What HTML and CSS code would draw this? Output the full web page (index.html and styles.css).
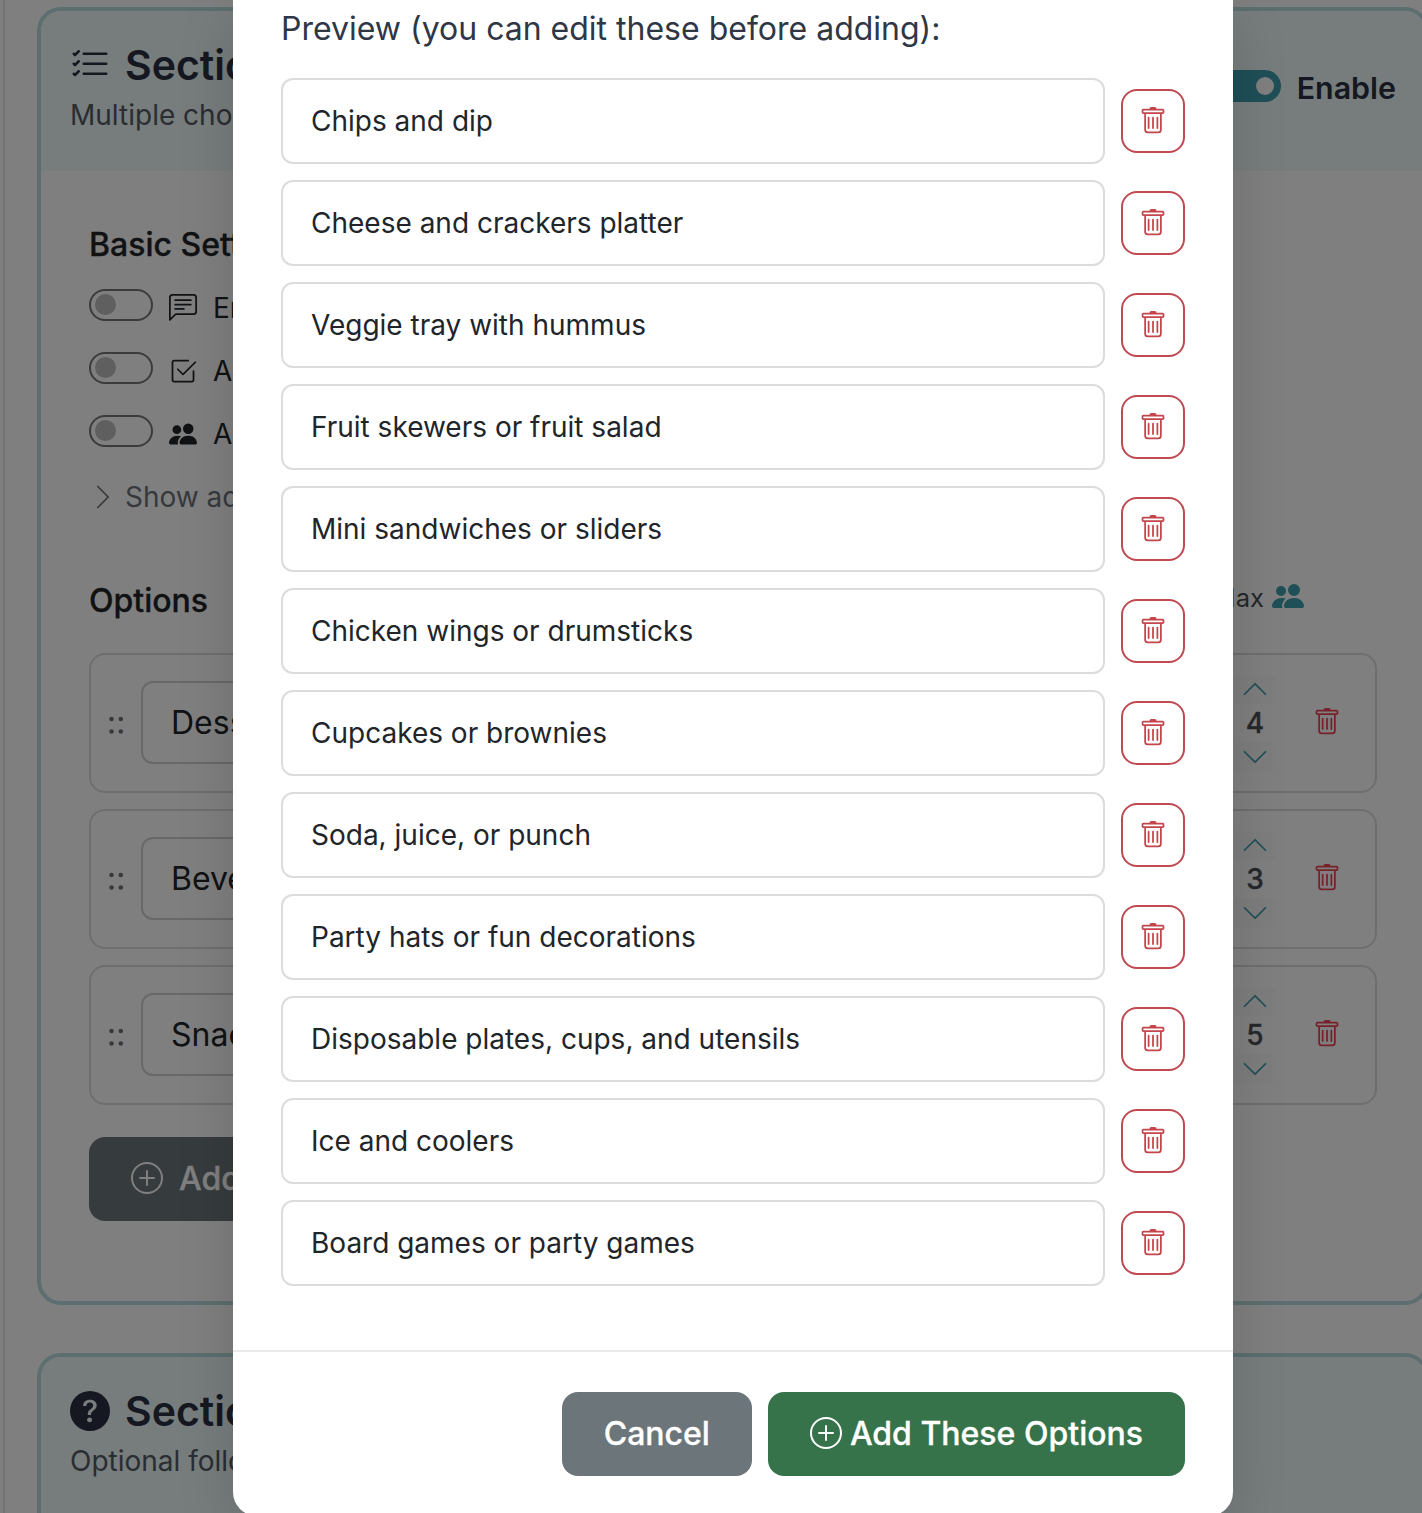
FILE: index.html
```
<!DOCTYPE html>
<html lang="en">
<head>
<meta charset="utf-8">
<title>Add options</title>
<link rel="stylesheet" href="styles.css">
</head>
<body>
<svg class="sprite" aria-hidden="true">
  <symbol id="trash" viewBox="0 0 16 16"><path d="M5.5 5.5A.5.5 0 0 1 6 6v6a.5.5 0 0 1-1 0V6a.5.5 0 0 1 .5-.5m2.5 0a.5.5 0 0 1 .5.5v6a.5.5 0 0 1-1 0V6a.5.5 0 0 1 .5-.5m3 .5a.5.5 0 0 0-1 0v6a.5.5 0 0 0 1 0z"/><path d="M14.5 3a1 1 0 0 1-1 1H13v9a2 2 0 0 1-2 2H5a2 2 0 0 1-2-2V4h-.5a1 1 0 0 1-1-1V2a1 1 0 0 1 1-1H6a1 1 0 0 1 1-1h2a1 1 0 0 1 1 1h3.5a1 1 0 0 1 1 1zM4.118 4 4 4.059V13a1 1 0 0 0 1 1h6a1 1 0 0 0 1-1V4.059L11.882 4zM2.5 3h11V2h-11z"/></symbol>
  <symbol id="plus" viewBox="0 0 16 16"><path d="M8 15A7 7 0 1 1 8 1a7 7 0 0 1 0 14m0 1A8 8 0 1 0 8 0a8 8 0 0 0 0 16"/><path d="M8 4a.5.5 0 0 1 .5.5v3h3a.5.5 0 0 1 0 1h-3v3a.5.5 0 0 1-1 0v-3h-3a.5.5 0 0 1 0-1h3v-3A.5.5 0 0 1 8 4"/></symbol>
  <symbol id="people" viewBox="0 0 16 16"><path d="M7 14s-1 0-1-1 1-4 5-4 5 3 5 4-1 1-1 1zm4-6a3 3 0 1 0 0-6 3 3 0 0 0 0 6m-5.784 6A2.24 2.24 0 0 1 5 13c0-1.355.68-2.75 1.936-3.72A6.3 6.3 0 0 0 5 9c-4 0-5 3-5 4s1 1 1 1zM4.500 8a2.500 2.500 0 1 0 0-5 2.500 2.500 0 0 0 0 5"/></symbol>
  <symbol id="chat" viewBox="0 0 16 16"><path d="M14 1a1 1 0 0 1 1 1v8a1 1 0 0 1-1 1H4.414A2 2 0 0 0 3 11.586l-2 2V2a1 1 0 0 1 1-1zM2 0a2 2 0 0 0-2 2v12.793a.5.5 0 0 0 .854.353l2.853-2.853A1 1 0 0 1 4.414 12H14a2 2 0 0 0 2-2V2a2 2 0 0 0-2-2z"/><path d="M3 3.500a.5.5 0 0 1 .5-.5h9a.5.5 0 0 1 0 1h-9a.5.5 0 0 1-.5-.5M3 6a.5.5 0 0 1 .5-.5h9a.5.5 0 0 1 0 1h-9A.5.5 0 0 1 3 6m0 2.500a.5.5 0 0 1 .5-.5h5a.5.5 0 0 1 0 1h-5a.5.5 0 0 1-.5-.5"/></symbol>
  <symbol id="check" viewBox="0 0 16 16"><path d="M3 14.500A1.500 1.500 0 0 1 1.500 13V3A1.500 1.500 0 0 1 3 1.500h8a.5.5 0 0 1 0 1H3a.5.5 0 0 0-.5.5v10a.5.5 0 0 0 .5.5h10a.5.5 0 0 0 .5-.5V8a.5.5 0 0 1 1 0v5a1.500 1.500 0 0 1-1.500 1.500z"/><path d="m8.354 10.354 7-7a.5.5 0 0 0-.708-.708L8 9.293 5.354 6.646a.5.5 0 1 0-.708.708l3 3a.5.5 0 0 0 .708 0"/></symbol>
  <symbol id="list" viewBox="0 0 16 16"><path d="M5 11.500a.5.5 0 0 1 .5-.5h9a.5.5 0 0 1 0 1h-9a.5.5 0 0 1-.5-.5m0-4a.5.5 0 0 1 .5-.5h9a.5.5 0 0 1 0 1h-9a.5.5 0 0 1-.5-.5m0-4a.5.5 0 0 1 .5-.5h9a.5.5 0 0 1 0 1h-9a.5.5 0 0 1-.5-.5M3.854 2.146a.5.5 0 0 1 0 .708l-1.500 1.500a.5.5 0 0 1-.708 0l-.5-.5a.5.5 0 1 1 .708-.708L2 3.293l1.146-1.147a.5.5 0 0 1 .708 0m0 4a.5.5 0 0 1 0 .708l-1.500 1.500a.5.5 0 0 1-.708 0l-.5-.5a.5.5 0 1 1 .708-.708L2 7.293l1.146-1.147a.5.5 0 0 1 .708 0m0 4a.5.5 0 0 1 0 .708l-1.500 1.500a.5.5 0 0 1-.708 0l-.5-.5a.5.5 0 0 1 .708-.708l.146.147 1.146-1.147a.5.5 0 0 1 .708 0"/></symbol>
  <symbol id="question" viewBox="0 0 16 16"><path d="M16 8A8 8 0 1 1 0 8a8 8 0 0 1 16 0M5.496 6.033h.825c.138 0 .248-.113.266-.25.09-.656.540-1.134 1.342-1.134.686 0 1.314.343 1.314 1.168 0 .635-.374.927-.965 1.371-.673.489-1.206 1.060-1.168 1.987l.003.217a.25.25 0 0 0 .25.246h.811a.25.25 0 0 0 .25-.25v-.105c0-.718.273-.927 1.010-1.486.609-.463 1.244-.977 1.244-2.056 0-1.511-1.276-2.241-2.673-2.241-1.267 0-2.655.590-2.750 2.286a.237.237 0 0 0 .241.247m2.325 6.443c.610 0 1.029-.394 1.029-.927 0-.552-.420-.940-1.029-.940-.584 0-1.009.388-1.009.940 0 .533.425.927 1.010.927z"/></symbol>
  <symbol id="right" viewBox="0 0 16 16"><path d="M4.646 1.646a.5.5 0 0 1 .708 0l6 6a.5.5 0 0 1 0 .708l-6 6a.5.5 0 0 1-.708-.708L10.293 8 4.646 2.354a.5.5 0 0 1 0-.708"/></symbol>
  <symbol id="up" viewBox="0 0 16 16"><path d="M7.646 4.646a.5.5 0 0 1 .708 0l6 6a.5.5 0 0 1-.708.708L8 5.707l-5.646 5.647a.5.5 0 0 1-.708-.708z"/></symbol>
  <symbol id="down" viewBox="0 0 16 16"><path d="M1.646 4.646a.5.5 0 0 1 .708 0L8 10.293l5.646-5.647a.5.5 0 0 1 .708.708l-6 6a.5.5 0 0 1-.708 0l-6-6a.5.5 0 0 1 0-.708"/></symbol>
  <symbol id="grip" viewBox="0 0 18 18"><circle cx="4.500" cy="3" r="2.300"/><circle cx="13.800" cy="3" r="2.300"/><circle cx="4.500" cy="15.500" r="2.300"/><circle cx="13.800" cy="15.500" r="2.300"/></symbol>
</svg>

<main class="page">
  <section class="card card-choices">
    <header class="card-head">
      <div class="head-text">
        <h2 class="card-title"><svg class="i40"><use href="#list"/></svg>Section</h2>
        <p class="card-sub">Multiple choice</p>
      </div>
      <div class="enable"><span class="switch on"></span>Enable</div>
    </header>
    <div class="card-body">
      <h3 class="sub-title">Basic Settings</h3>
      <div class="setting"><span class="switch"></span><svg class="i28"><use href="#chat"/></svg><span>Enable</span></div>
      <div class="setting"><span class="switch"></span><svg class="i28"><use href="#check"/></svg><span>Allow</span></div>
      <div class="setting"><span class="switch"></span><svg class="i28"><use href="#people"/></svg><span>Allow</span></div>
      <div class="advanced"><svg class="i28"><use href="#right"/></svg><span>Show advanced</span></div>
      <div class="options-head">
        <h3 class="sub-title">Options</h3>
        <div class="max">Max<svg class="i32"><use href="#people"/></svg></div>
      </div>
      <div class="option">
        <svg class="grip"><use href="#grip"/></svg><div class="option-name">Desserts</div>
        <div class="stepper"><span class="step"><svg><use href="#up"/></svg></span><b>4</b><span class="step"><svg><use href="#down"/></svg></span></div>
        <svg class="i28 red"><use href="#trash"/></svg>
      </div>
      <div class="option">
        <svg class="grip"><use href="#grip"/></svg><div class="option-name">Beverages</div>
        <div class="stepper"><span class="step"><svg><use href="#up"/></svg></span><b>3</b><span class="step"><svg><use href="#down"/></svg></span></div>
        <svg class="i28 red"><use href="#trash"/></svg>
      </div>
      <div class="option">
        <svg class="grip"><use href="#grip"/></svg><div class="option-name">Snacks</div>
        <div class="stepper"><span class="step"><svg><use href="#up"/></svg></span><b>5</b><span class="step"><svg><use href="#down"/></svg></span></div>
        <svg class="i28 red"><use href="#trash"/></svg>
      </div>
      <div class="btn btn-dark"><svg class="i32"><use href="#plus"/></svg>Add</div>
    </div>
  </section>
  <section class="card">
    <header class="card-head">
      <div class="head-text">
        <h2 class="card-title"><svg class="i40"><use href="#question"/></svg>Section</h2>
        <p class="card-sub">Optional follow</p>
      </div>
    </header>
  </section>
</main>

<div class="backdrop">
  <div class="modal">
    <div class="modal-body">
      <h4 class="modal-title">Preview (you can edit these before adding):</h4>
      <div class="row"><div class="field">Chips and dip</div><div class="del"><svg class="i28"><use href="#trash"/></svg></div></div>
      <div class="row"><div class="field">Cheese and crackers platter</div><div class="del"><svg class="i28"><use href="#trash"/></svg></div></div>
      <div class="row"><div class="field">Veggie tray with hummus</div><div class="del"><svg class="i28"><use href="#trash"/></svg></div></div>
      <div class="row"><div class="field">Fruit skewers or fruit salad</div><div class="del"><svg class="i28"><use href="#trash"/></svg></div></div>
      <div class="row"><div class="field">Mini sandwiches or sliders</div><div class="del"><svg class="i28"><use href="#trash"/></svg></div></div>
      <div class="row"><div class="field">Chicken wings or drumsticks</div><div class="del"><svg class="i28"><use href="#trash"/></svg></div></div>
      <div class="row"><div class="field">Cupcakes or brownies</div><div class="del"><svg class="i28"><use href="#trash"/></svg></div></div>
      <div class="row"><div class="field">Soda, juice, or punch</div><div class="del"><svg class="i28"><use href="#trash"/></svg></div></div>
      <div class="row"><div class="field">Party hats or fun decorations</div><div class="del"><svg class="i28"><use href="#trash"/></svg></div></div>
      <div class="row"><div class="field">Disposable plates, cups, and utensils</div><div class="del"><svg class="i28"><use href="#trash"/></svg></div></div>
      <div class="row"><div class="field">Ice and coolers</div><div class="del"><svg class="i28"><use href="#trash"/></svg></div></div>
      <div class="row"><div class="field">Board games or party games</div><div class="del"><svg class="i28"><use href="#trash"/></svg></div></div>
    </div>
    <footer class="modal-foot">
      <div class="btn btn-grey">Cancel</div>
      <div class="btn btn-green"><svg class="i32"><use href="#plus"/></svg>Add These Options</div>
    </footer>
  </div>
</div>
</body>
</html>
```
FILE: styles.css
```
* { box-sizing: border-box; }
html, body { height: 1513px; overflow: hidden; }
body {
  margin: 0;
  position: relative;
  background: #fff;
  color: #212529;
  font-family: Inter, "Liberation Sans", sans-serif;
  font-size: 28px;
}
h2, h3, h4, p { margin: 0; }
svg { fill: currentColor; flex: none; display: block; }
.sprite { display: none; }
.i28 { width: 28px; height: 28px; }
.i32 { width: 32px; height: 32px; }
.i40 { width: 40px; height: 40px; }
.red { color: #ec4555; }

/* Page behind the dialog */
.page {
  width: 1460px;
  height: 1513px;
  margin-left: 3px;
  border-left: 2px solid #e6e6e6;
  padding: 7px 0 0 32px;
  overflow: hidden;
}
.card {
  width: 1392px;
  height: 400px;
  border: 4px solid #b8dcde;
  border-radius: 24px;
  overflow: hidden;
}
.card-choices { height: 1298px; margin-bottom: 48px; }
.card-head {
  display: flex;
  justify-content: space-between;
  height: 160px;
  padding: 25px 29px 0 29px;
  background: #eefafa;
  color: #2d3142;
}
.card + .card .card-head { height: 400px; }
.card-title {
  display: flex;
  align-items: center;
  gap: 15px;
  height: 57px;
  font-size: 41px;
  font-weight: 600;
}
.card-sub { height: 42px; line-height: 45px; color: #555b63; }
.enable {
  display: flex;
  align-items: center;
  gap: 16px;
  height: 56px;
  margin-top: 24px;
  font-size: 30.4px;
  font-weight: 600;
}
.switch {
  display: flex;
  align-items: center;
  width: 64px;
  height: 32px;
  border: 2px solid #777;
  border-radius: 16px;
  padding: 0 3.5px;
}
.switch::before {
  content: "";
  width: 21px;
  height: 21px;
  border-radius: 50%;
  background: #bfbfbf;
}
.switch.on {
  justify-content: flex-end;
  margin-bottom: 4px;
  padding-right: 5px;
  background: #3f9fae;
  border-color: #3f9fae;
}
.switch.on::before { width: 18px; height: 18px; background: #fff; }
.card-body { padding: 49px 48px 0; }
.sub-title { height: 48px; line-height: 50px; font-size: 32px; font-weight: 500; -webkit-text-stroke: .3px; }
.setting { display: flex; align-items: center; gap: 16px; height: 63px; }
.sub-title + .setting { margin-top: 5px; }
.setting svg { margin-top: 6px; }
.setting span:last-child { margin-top: 6px; }
.advanced { display: flex; align-items: center; gap: 8px; height: 63px; padding-top: 6px; color: #6c757d; }
.options-head { display: flex; justify-content: space-between; height: 77px; margin-top: 51px; }
.max { display: flex; align-items: center; gap: 8px; height: 42px; margin-right: 73px; font-size: 25.6px; color: #495057; }
.max svg { color: #3f9fae; margin-bottom: 3px; }
.option {
  display: flex;
  align-items: center;
  height: 140px;
  padding: 0 34px 0 16px;
  margin-bottom: 16px;
  border: 2px solid #dcdcdc;
  border-radius: 16px;
}
.option > .red { margin-bottom: 3px; }
.grip { width: 18px; height: 18px; margin-right: 16px; margin-top: 4px; color: #6c757d; }
.option-name {
  width: 1060px;
  height: 83px;
  padding-left: 28px;
  line-height: 80px;
  margin-bottom: 1px;
  font-size: 32px;
  border: 2px solid #ced0d2;
  border-radius: 12px;
}
.stepper {
  width: 40px;
  margin: 0 38px 0 auto;
  display: flex;
  flex-direction: column;
  align-items: center;
  font-size: 28px;
}
.stepper b { height: 38px; line-height: 38px; font-weight: 500; -webkit-text-stroke: .3px; color: #495057; }
.step { width: 42px; height: 29px; background: #fafafa; border-radius: 4px; color: #3f9fae; display: flex; align-items: center; justify-content: center; }
.step svg { width: 28px; height: 28px; }
.step:first-child svg { margin-bottom: 2px; }
.btn {
  display: inline-flex;
  align-items: center;
  height: 84px;
  padding: 0 42px 2px;
  border-radius: 16px;
  color: #fff;
  font-size: 32px;
  font-weight: 500;
  -webkit-text-stroke: .3px;
}
.btn-dark { width: 420px; margin-top: 16px; gap: 16px; background: #6c767a; }

/* Dialog */
.backdrop {
  position: absolute;
  inset: 0;
  background: rgba(0, 0, 0, .5);
  overflow: hidden;
}
.modal {
  width: 1000px;
  height: 1516px;
  margin-left: 233px;
  background: #fff;
  border-radius: 0 0 24px 24px;
  box-shadow: 0 16px 56px rgba(0, 0, 0, .15);
}
.modal-body { height: 1350px; padding: 4px 48px 0; }
.modal-title { height: 74px; line-height: 50px; font-size: 32px; font-weight: 400; color: #2f3747; }
.row { display: flex; align-items: center; gap: 16px; margin-bottom: 16px; }
.field {
  flex: 1;
  height: 86px;
  padding-left: 28px;
  line-height: 82px;
  border: 2px solid #dcdcdc;
  border-radius: 12px;
}
.del {
  width: 64px;
  height: 64px;
  display: flex;
  align-items: center;
  justify-content: center;
  border: 2px solid #bf4a50;
  border-radius: 16px;
  color: #c4454b;
}
.modal-foot {
  display: flex;
  justify-content: flex-end;
  gap: 16px;
  padding: 40px 48px;
  border-top: 2px solid #e9eaeb;
}
.btn-grey { background: #6c757a; }
.btn-green { gap: 8px; background: #36734b; }
```
